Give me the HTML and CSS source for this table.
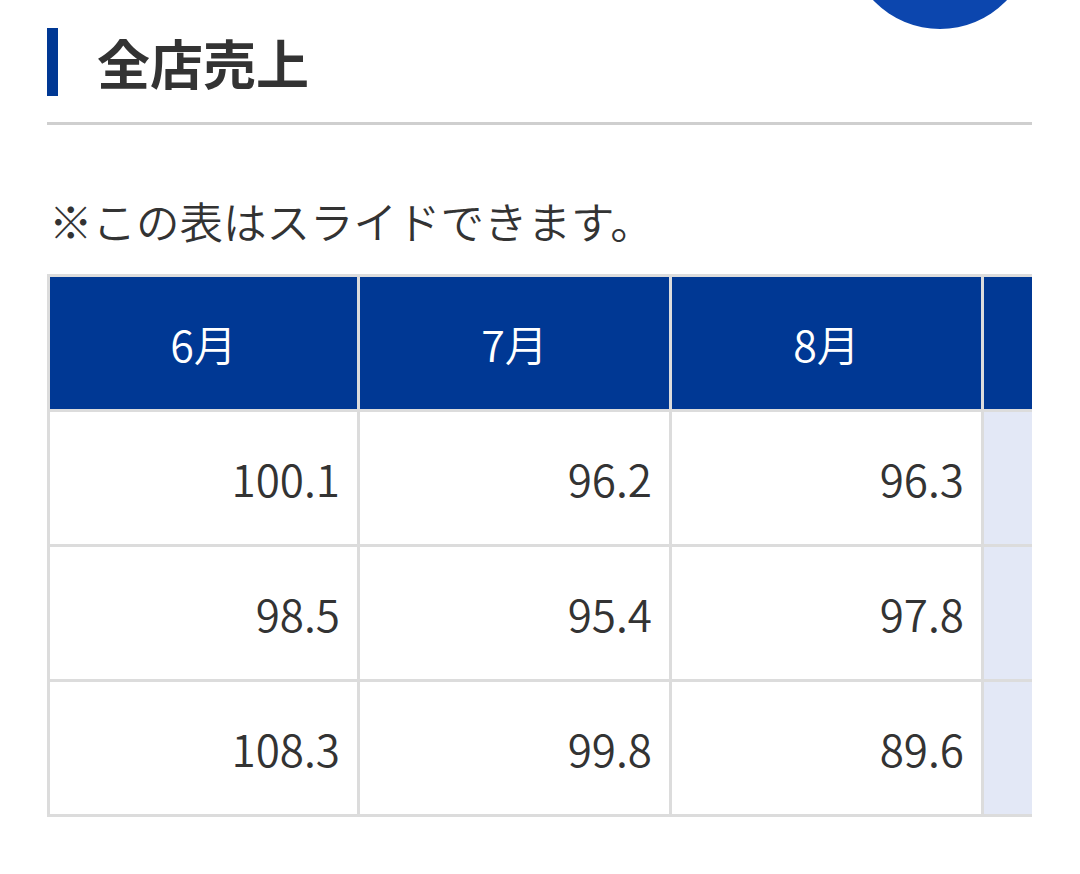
FILE: index.html
```html
<!DOCTYPE html>
<html lang="ja">
<head>
<meta charset="utf-8">
<title>全店売上</title>
<link rel="stylesheet" href="styles.css">
</head>
<body>
<div class="page">
  <div class="circle"></div>
  <section class="section">
    <div class="heading-wrap">
      <h2 class="heading">全店売上</h2>
    </div>
    <p class="note">※この表はスライドできます。</p>
    <div class="table-scroll">
      <table class="sales">
        <colgroup>
          <col class="col-first"><col class="col"><col class="col"><col class="col">
        </colgroup>
        <thead>
          <tr><th>6月</th><th>7月</th><th>8月</th><th class="extra"></th></tr>
        </thead>
        <tbody>
          <tr><td>100.1</td><td>96.2</td><td>96.3</td><td class="extra"></td></tr>
          <tr><td>98.5</td><td>95.4</td><td>97.8</td><td class="extra"></td></tr>
          <tr><td>108.3</td><td>99.8</td><td>89.6</td><td class="extra"></td></tr>
        </tbody>
      </table>
    </div>
  </section>
</div>
</body>
</html>
```
FILE: styles.css
```css
html, body {
  margin: 0;
  padding: 0;
  background: #fff;
}
body {
  font-family: "Noto Sans CJK JP", "Noto Sans", sans-serif;
  color: #333;
}
.page {
  position: relative;
  width: 1080px;
  height: 874px;
  overflow: hidden;
}
.circle {
  position: absolute;
  left: 848px;
  top: -155px;
  width: 184px;
  height: 184px;
  border-radius: 50%;
  background: #0c46ae;
}
.section {
  padding: 28px 48px 0 47px;
}
.heading-wrap {
  padding-bottom: 26px;
  border-bottom: 3px solid #cfcfcf;
}
.heading {
  margin: 0;
  border-left: 11px solid #003894;
  padding-left: 39px;
  height: 68px;
  line-height: 68px;
  font-size: 53px;
  font-weight: 700;
  color: #333;
}
.note {
  margin: 66px 0 0 2px;
  font-size: 43.5px;
  font-weight: 350;
  line-height: 60px;
  color: #333;
}
.table-scroll {
  margin-top: 23px;
  overflow: hidden;
}
.sales {
  border-collapse: collapse;
  table-layout: fixed;
  width: 1246px;
}
.col-first {
  width: 310px;
}
.col {
  width: 312px;
}
.sales th,
.sales td {
  height: 135px;
  box-sizing: border-box;
  border: 3px solid #dcdcdc;
  padding: 0 17px 0 0;
  font-size: 44px;
  font-weight: 350;
  vertical-align: middle;
}
.sales th {
  background: #003894;
  color: #fff;
  text-align: center;
  padding: 0;
  font-size: 43px;
}
.sales td {
  text-align: right;
  color: #333;
  background: #fff;
}
.sales td.extra {
  background: #e3e8f6;
}
```
